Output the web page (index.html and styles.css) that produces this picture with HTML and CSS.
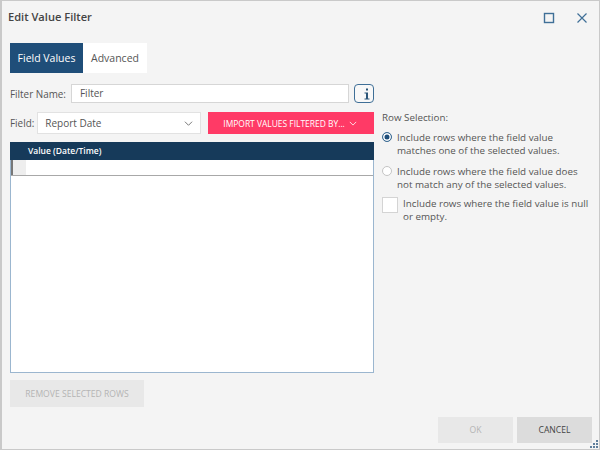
FILE: index.html
```html
<!DOCTYPE html>
<html lang="en">
<head>
<meta charset="utf-8">
<title>Edit Value Filter</title>
<link rel="stylesheet" href="styles.css">
</head>
<body>
<div class="dialog">
  <header class="titlebar">
    <h1 class="title">Edit Value Filter</h1>
    <div class="window-controls">
      <svg class="win-icon" viewBox="0 0 12 12"><rect x="1.5" y="1.5" width="9" height="9" fill="none" stroke="#3f6f97" stroke-width="1.4"/></svg>
      <svg class="win-icon" viewBox="0 0 12 12"><path d="M1.500 1.500l9 9M10.500 1.500l-9 9" fill="none" stroke="#3f6f97" stroke-width="1.2"/></svg>
    </div>
  </header>
  <nav class="tabs">
    <div class="tab tab-active">Field Values</div>
    <div class="tab">Advanced</div>
  </nav>
  <main class="body">
    <section class="left">
      <div class="row row-name">
        <label class="label">Filter Name:</label>
        <div class="input">Filter</div>
        <div class="info"><svg viewBox="0 0 8 12" class="info-glyph"><path d="M3 0.500h2v2H3zM1.500 4.500h3.500v6h1.500v1H1.500v-1H3V5.500H1.500z" fill="#2b5578"/></svg></div>
      </div>
      <div class="row row-field">
        <label class="label">Field:</label>
        <div class="select"><span>Report Date</span>
          <svg class="chev" viewBox="0 0 12 7"><path d="M1 1l5 5 5-5" fill="none" stroke="#555" stroke-width="1.1"/></svg>
        </div>
        <div class="import">IMPORT VALUES FILTERED BY...
          <svg class="chev-w" viewBox="0 0 10 6"><path d="M1 1l4 4 4-4" fill="none" stroke="#fff" stroke-width="1"/></svg>
        </div>
      </div>
      <div class="grid">
        <div class="grid-head"><div class="grid-corner"></div><div class="grid-col">Value (Date/Time)</div></div>
        <div class="grid-row"><div class="grid-rowhead"></div><div class="grid-cell"></div></div>
      </div>
      <div class="btn btn-remove">REMOVE SELECTED ROWS</div>
    </section>
    <aside class="right">
      <div class="sel-title">Row Selection:</div>
      <div class="option">
        <span class="radio radio-on"></span>
        <span>Include rows where the field value<br>matches one of the selected values.</span>
      </div>
      <div class="option">
        <span class="radio"></span>
        <span>Include rows where the field value does<br>not match any of the selected values.</span>
      </div>
      <div class="option option-check">
        <span class="check"></span>
        <span>Include rows where the field value is null<br>or empty.</span>
      </div>
    </aside>
  </main>
  <footer class="footer">
    <div class="btn btn-ok">OK</div>
    <div class="btn btn-cancel">CANCEL</div>
    <svg class="grip" viewBox="0 0 8 8"><path d="M6 0h2v2H6zM3 3h2v2H3zM6 3h2v2H6zM0 6h2v2H0zM3 6h2v2H3zM6 6h2v2H6z" fill="#5f7f9c"/></svg>
  </footer>
</div>
</body>
</html>
```
FILE: styles.css
```css
* { box-sizing: border-box; }
html, body { margin: 0; padding: 0; }
body {
  width: 600px; height: 450px; overflow: hidden;
  font-family: "Open Sans", "Noto Sans", sans-serif;
  font-size: 10px; color: #444;
}
.dialog {
  width: 600px; height: 450px; background: #f4f4f4;
  border: 1px solid #c9c9c9; border-width: 1px 1px 1px 2px;
  display: flex; flex-direction: column; position: relative;
}
.titlebar { height: 42px; display: flex; align-items: flex-start; justify-content: space-between; padding: 8px 11px 0 6px; }
.title { margin: 0; font-size: 11.1px; font-weight: 600; color: #444; line-height: 15px; }
.window-controls { display: flex; gap: 21px; padding-top: 3px; }
.win-icon { width: 12px; height: 12px; display: block; }
.tabs { display: flex; margin-left: 8px; height: 30px; }
.tab { background: #fff; display: flex; align-items: center; justify-content: center; width: 64px; font-size: 10.5px; color: #555; }
.tab-active { width: 73px; background: #1f4e79; color: #fff; }
.body { display: flex; padding: 11px 0 0 8px; flex: 1; }
.left { width: 364px; display: flex; flex-direction: column; }
.row { display: flex; align-items: center; }
.row-name { height: 19px; }
.row-field { height: 22px; margin-top: 9px; }
.label { font-size: 9.9px; color: #555; white-space: nowrap; }
.input { margin-left: 5px; width: 279px; height: 19px; background: #fff; border: 1px solid #d6d6d6; padding-left: 8px; line-height: 17px; color: #555; }
.info { margin-left: 5px; width: 20px; height: 19px; background: #f8f8f8; border: 1px solid #3f6f97; border-radius: 4px; display: flex; align-items: center; justify-content: flex-end; padding-right: 2px; }
.info-glyph { width: 8px; height: 12px; }
.select { margin-left: 3px; width: 164px; height: 22px; background: #fff; border: 1px solid #e2e2e2; display: flex; align-items: center; justify-content: space-between; padding: 0 7px 0 7px; color: #555; }
.chev { width: 9px; height: 5px; }
.import { margin-left: 7px; width: 166px; height: 22px; background: #ff3a66; color: #fff; font-size: 8.45px; display: flex; align-items: center; justify-content: center; gap: 4px; white-space: nowrap; padding-right: 2px; }
.chev-w { width: 8px; height: 5px; }
.grid { margin-top: 8px; height: 231px; background: #fff; border: 1px solid #9bb6cf; border-top: none; }
.grid-head { height: 18px; margin: 0 -1px; background: #163a5a; display: flex; }
.grid-corner { width: 16px; }
.grid-col { color: #fff; font-size: 8.5px; font-weight: 600; line-height: 18px; margin-left: 2px; }
.grid-row { height: 16px; display: flex; border-bottom: 1px solid #a8a8a8; }
.grid-rowhead { width: 15px; background: #eeeeee; border-left: 2px solid #777; }
.grid-cell { flex: 1; background: #fff; }
.btn { display: flex; align-items: center; justify-content: center; font-size: 8.6px; }
.btn-remove { margin-top: 7px; width: 134px; height: 27px; background: #e8e8e8; color: #b4b4b4; }
.right { margin-left: 8px; width: 218px; font-size: 9.8px; color: #555; line-height: 13px; }
.sel-title { margin-top: 27px; }
.option { display: flex; margin-top: 7px; }
.option + .option { margin-top: 8px; }
.radio { width: 10px; height: 10px; border-radius: 50%; border: 1px solid #c4c4c4; background: #fff; margin: 1px 5px 0 0; flex: none; }
.radio-on { border-color: #3f6f97; background: #1f4e79; box-shadow: inset 0 0 0 1.5px #fff; }
.option + .option-check { margin-top: 6px; }
.check { width: 16px; height: 16px; background: #fff; border: 1px solid #d4d4d4; margin-right: 5px; flex: none; }
.footer { position: absolute; right: 7px; bottom: 6px; display: flex; gap: 4px; }
.btn-ok { width: 75px; height: 26px; background: #e8e8e8; color: #b4b4b4; }
.btn-cancel { width: 75px; height: 26px; background: #dcdcdc; color: #444; }
.grip { position: absolute; right: -6px; bottom: -5px; width: 8px; height: 8px; }
```
